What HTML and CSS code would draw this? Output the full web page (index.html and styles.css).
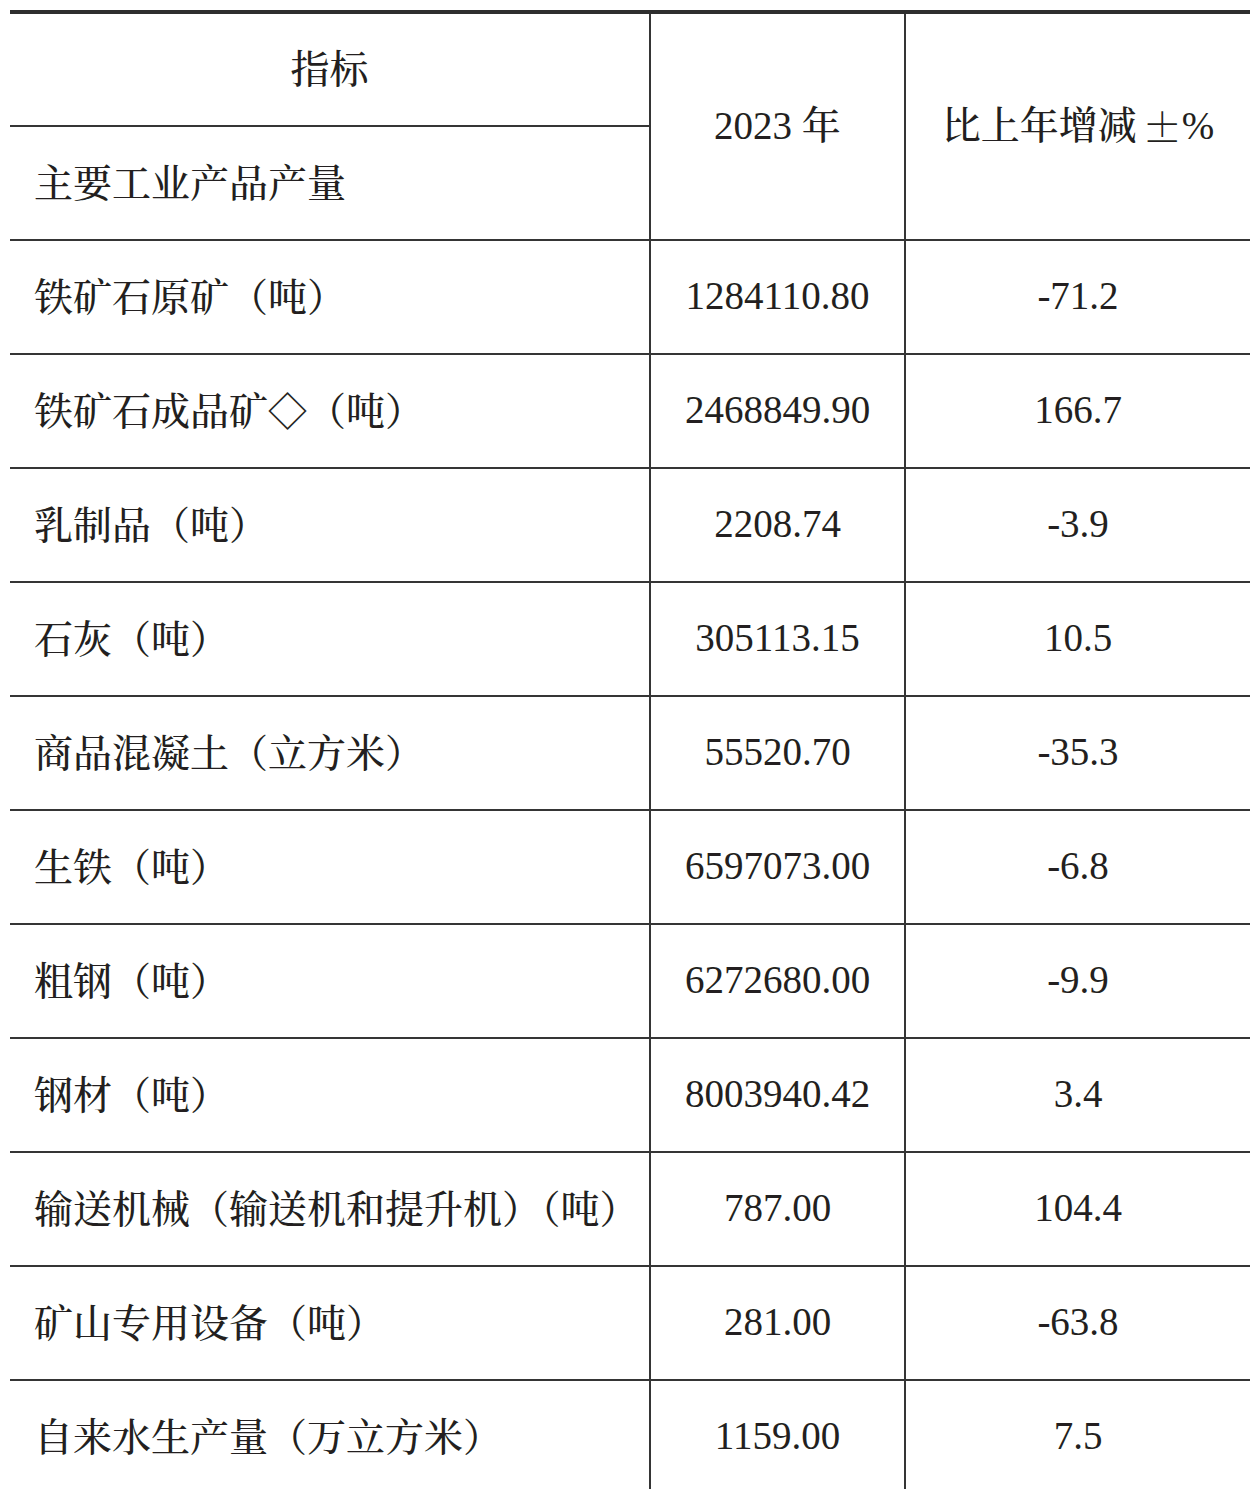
FILE: index.html
```html
<!DOCTYPE html>
<html lang="zh-CN">
<head>
<meta charset="utf-8">
<title>主要工业产品产量</title>
<link rel="stylesheet" href="styles.css">
</head>
<body>
<div class="table">
  <div class="cell head-top">指标</div>
  <div class="cell num head-year">2023 年</div>
  <div class="cell num head-change">比上年增减 <span class="sym">±</span>%</div>
  <div class="cell name">主要工业产品产量</div>

  <div class="cell name">铁矿石原矿（吨）</div>
  <div class="cell num">1284110.80</div>
  <div class="cell num">-71.2</div>

  <div class="cell name">铁矿石成品矿◇（吨）</div>
  <div class="cell num">2468849.90</div>
  <div class="cell num">166.7</div>

  <div class="cell name">乳制品（吨）</div>
  <div class="cell num">2208.74</div>
  <div class="cell num">-3.9</div>

  <div class="cell name">石灰（吨）</div>
  <div class="cell num">305113.15</div>
  <div class="cell num">10.5</div>

  <div class="cell name">商品混凝土（立方米）</div>
  <div class="cell num">55520.70</div>
  <div class="cell num">-35.3</div>

  <div class="cell name">生铁（吨）</div>
  <div class="cell num">6597073.00</div>
  <div class="cell num">-6.8</div>

  <div class="cell name">粗钢（吨）</div>
  <div class="cell num">6272680.00</div>
  <div class="cell num">-9.9</div>

  <div class="cell name">钢材（吨）</div>
  <div class="cell num">8003940.42</div>
  <div class="cell num">3.4</div>

  <div class="cell name">输送机械（输送机和提升机）（吨）</div>
  <div class="cell num">787.00</div>
  <div class="cell num">104.4</div>

  <div class="cell name">矿山专用设备（吨）</div>
  <div class="cell num">281.00</div>
  <div class="cell num">-63.8</div>

  <div class="cell name">自来水生产量（万立方米）</div>
  <div class="cell num">1159.00</div>
  <div class="cell num">7.5</div>
</div>
</body>
</html>
```

FILE: styles.css
```css
html, body {
  margin: 0;
  padding: 0;
  background: #ffffff;
}

body {
  font-family: "Liberation Serif", "Noto Serif CJK SC", "Noto Sans CJK SC", serif;
  font-weight: 500;
  color: #231f20;
}

.table {
  display: grid;
  grid-template-columns: 639px 255px 346px;
  grid-template-rows: 113px 114px;
  grid-auto-rows: 114px;
  margin: 10px 0 0 10px;
  width: 1240px;
  border-top: 4px solid #2e2e2e;
}

.cell {
  box-sizing: border-box;
  display: flex;
  align-items: center;
  border-bottom: 2px solid #353535;
  font-size: 39px;
  line-height: 1;
  white-space: nowrap;
}

.name {
  padding-left: 24px;
  grid-column: 1;
}

.num {
  justify-content: center;
  padding-bottom: 3px;
  border-left: 2px solid #353535;
}

.head-top {
  grid-column: 1;
  grid-row: 1;
  justify-content: center;
}

.head-year {
  grid-column: 2;
  grid-row: 1 / span 2;
}

.head-change {
  grid-column: 3;
  grid-row: 1 / span 2;
}

.sym {
  font-family: "Noto Serif CJK SC", "Noto Sans CJK SC", serif;
  margin-left: 0.15em;
}
```
